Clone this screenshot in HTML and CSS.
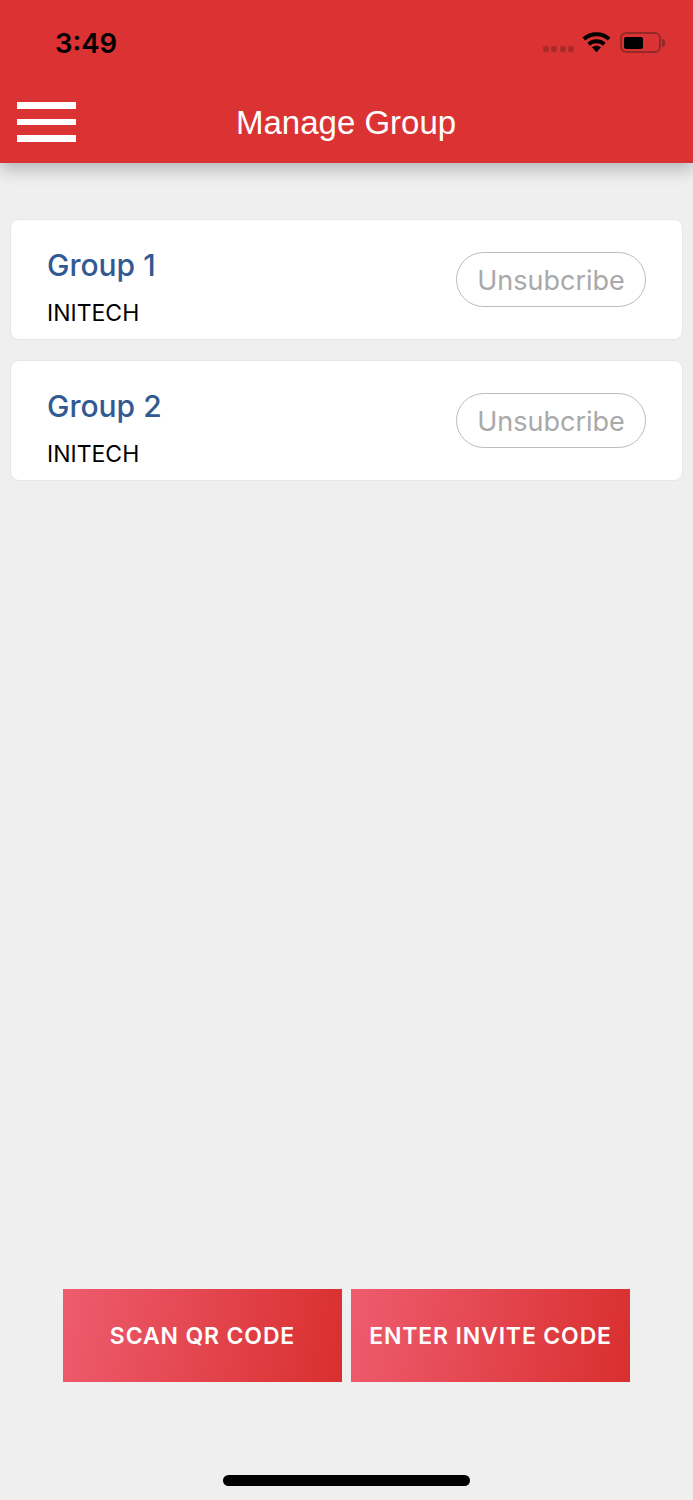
FILE: index.html
```html
<!DOCTYPE html>
<html lang="en">
<head>
    <meta charset="UTF-8">
    <meta name="viewport" content="width=device-width, initial-scale=1.0">
    <title>Manage Group</title>
    <link rel="stylesheet" href="styles.css">
</head>
<body>
<div class="page">
    <header class="top">
        <div class="status-bar">
            <span class="clock">3:49</span>
            <div class="status-icons">
                <div class="signal"><i></i><i></i><i></i><i></i></div>
                <svg class="wifi" width="29" height="21" viewBox="0 0 28 20">
                    <path d="M14 19.5l-4.4-4.8c2.5-2.1 6.3-2.1 8.8 0z" fill="#000"/>
                    <path d="M6.4 11.6c4.3-3.7 10.9-3.7 15.2 0M1.8 6.6c6.9-6.2 17.5-6.2 24.4 0" fill="none" stroke="#000" stroke-width="3.8"/>
                </svg>
                <div class="battery"><div class="battery-level"></div></div>
                <div class="battery-cap"></div>
            </div>
        </div>
        <nav class="nav-bar">
            <div class="menu-icon"><span></span><span></span><span></span></div>
            <h1 class="nav-title">Manage Group</h1>
        </nav>
    </header>

    <main class="group-list">
        <div class="group-card">
            <div class="group-info">
                <p class="group-name">Group 1</p>
                <p class="group-org">INITECH</p>
            </div>
            <button class="unsub-btn">Unsubcribe</button>
        </div>
        <div class="group-card">
            <div class="group-info">
                <p class="group-name">Group 2</p>
                <p class="group-org">INITECH</p>
            </div>
            <button class="unsub-btn">Unsubcribe</button>
        </div>
    </main>

    <div class="actions">
        <button class="action-btn">SCAN QR CODE</button>
        <button class="action-btn">ENTER INVITE CODE</button>
    </div>

    <div class="home-row"><div class="home-bar"></div></div>
</div>
</body>
</html>
```

FILE: styles.css
```css
html, body {
    margin: 0;
    padding: 0;
}

body {
    background-color: #efefef;
    font-family: Inter, "Liberation Sans", sans-serif;
}

.page {
    display: flex;
    flex-direction: column;
    height: 1500px;
    overflow: hidden;
}

.top {
    height: 163px;
    background-color: #db3333;
    box-shadow: 0 6px 16px rgba(0, 0, 0, 0.25);
}

.status-bar {
    display: flex;
    justify-content: space-between;
    align-items: center;
    height: 85px;
    padding: 0 28px 0 55px;
}

.clock {
    font-size: 27.5px;
    font-weight: 600;
    color: #000;
}

.status-icons {
    display: flex;
    align-items: center;
}

.signal {
    display: flex;
    gap: 2.5px;
    margin-right: 8px;
    margin-top: 12px;
}

.signal i {
    width: 6px;
    height: 6px;
    border-radius: 2px;
    background-color: #a82a2a;
}

.wifi {
    margin-right: 9px;
    margin-top: -1px;
}

.battery {
    box-sizing: border-box;
    width: 41px;
    height: 21px;
    padding: 2.5px 2px;
    border: 2px solid #962828;
    border-radius: 6px;
}

.battery-level {
    width: 19px;
    height: 12px;
    border-radius: 2px;
    background-color: #000;
}

.battery-cap {
    width: 3px;
    height: 8px;
    margin-left: 1px;
    border-radius: 0 3px 3px 0;
    background-color: #962828;
}

.nav-bar {
    display: flex;
    align-items: center;
    height: 78px;
    padding-left: 17px;
}

.menu-icon {
    display: flex;
    flex-direction: column;
    gap: 10px;
    width: 59px;
    margin-bottom: 4px;
}

.menu-icon span {
    height: 6.5px;
    background-color: #fff;
}

.nav-title {
    margin: 0 0 2px 160px;
    font-family: "Liberation Sans", sans-serif;
    font-size: 33px;
    font-weight: 400;
    color: #fff;
}

.group-list {
    flex: 1;
    display: flex;
    flex-direction: column;
    gap: 20px;
    padding: 56px 10px 0;
}

.group-card {
    box-sizing: border-box;
    display: flex;
    justify-content: space-between;
    align-items: center;
    height: 121px;
    padding: 0 36px;
    background-color: #fff;
    border: 1px solid #e6e6e6;
    border-radius: 9px;
}

.group-info {
    padding-top: 14px;
}

.group-name {
    margin: 0 0 16px;
    font-size: 30px;
    font-weight: 500;
    line-height: 36px;
    color: #315a92;
}

.group-org {
    margin: 0;
    font-size: 23px;
    line-height: 28px;
    color: #000;
}

.unsub-btn {
    width: 190px;
    height: 55px;
    padding: 2px 0 0;
    background-color: #fff;
    border: 1px solid #bdbdbd;
    border-radius: 28px;
    font-family: Inter, "Liberation Sans", sans-serif;
    font-size: 27px;
    color: #a9a9a9;
}

.actions {
    display: flex;
    justify-content: center;
    gap: 9px;
}

.action-btn {
    width: 279px;
    height: 93px;
    padding: 0;
    background: linear-gradient(100deg, #ee5c6e 0%, #d92f2f 100%);
    border: none;
    font-family: Inter, "Liberation Sans", sans-serif;
    font-size: 23px;
    font-weight: 600;
    letter-spacing: 0.85px;
    color: #fff;
}

.home-row {
    display: flex;
    justify-content: center;
    padding: 93px 0 14px;
}

.home-bar {
    width: 247px;
    height: 11px;
    border-radius: 6px;
    background-color: #000;
}
```
